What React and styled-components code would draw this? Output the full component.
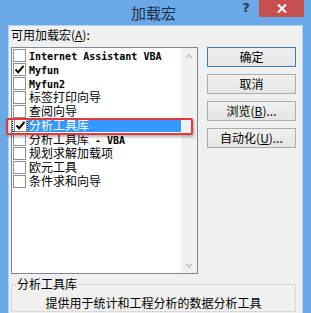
import styled, { createGlobalStyle } from "styled-components";

const GlobalStyle = createGlobalStyle`
  html, body {
    margin: 0;
    padding: 0;
    overflow: hidden;
  }
  body {
    font-family: "Noto Sans CJK SC", "Noto Sans", sans-serif;
    font-size: 12px;
    color: #000;
  }
`;

const Window = styled.div`
  width: 311px;
  height: 313px;
  background: #6ba8e7;
  display: flex;
  flex-direction: column;
  overflow: hidden;
`;

const TitleBar = styled.div`
  height: 25px;
  flex: none;
  display: grid;
  grid-template-columns: 1fr auto 1fr;
  align-items: start;
`;

const Title = styled.div`
  grid-column: 2;
  padding-right: 4px;
  font-size: 15px;
  line-height: 25px;
  color: #1c2f45;
`;

const Controls = styled.div`
  grid-column: 3;
  justify-self: end;
  display: flex;
  margin-right: 7px;
`;

const Help = styled.div`
  width: 26px;
  height: 17px;
  font-family: "DejaVu Sans", sans-serif;
  font-weight: bold;
  font-size: 13px;
  line-height: 15px;
  text-align: center;
  color: #2a3a4c;
`;

const Close = styled.div`
  width: 45px;
  height: 17px;
  background: #c75050;
  display: flex;
  align-items: center;
  justify-content: center;
`;

const Client = styled.div`
  flex: 1;
  margin: 0 8px;
  border: 1px solid #b4d2f1;
  border-bottom: none;
  background: #f0f0f0;
  padding: 0 6px 0 2px;
`;

const Label = styled.div`
  height: 21px;
  line-height: 16px;
  padding-top: 1px;
  box-sizing: border-box;
`;

const MainRow = styled.div`
  display: flex;
  gap: 9px;
  align-items: flex-start;
`;

const ListBox = styled.div`
  position: relative;
  width: 187px;
  height: 227px;
  box-sizing: border-box;
  border: 1px solid #828790;
  background: #fff;
  display: flex;
`;

const Items = styled.div`
  flex: 1;
  padding-top: 0;
`;

const Row = styled.div`
  display: flex;
  height: 14px;
  line-height: 14px;
`;

const CheckCell = styled.div`
  width: 16px;
  height: 14px;
  box-sizing: border-box;
  display: flex;
  align-items: center;
  padding-left: 1px;
  border: 1px dotted ${(p) => (p.$focus ? "#000" : "transparent")};
  border-width: ${(p) => (p.$focus ? "1px" : "0")};
`;

const Box = styled.div`
  width: 13px;
  height: 13px;
  box-sizing: border-box;
  border: 1px solid #8e8f8f;
  background: #fff;
  display: flex;
  align-items: center;
  justify-content: center;
`;

const ItemText = styled.div`
  flex: 1;
  padding-left: 1px;
  white-space: pre;
  background: ${(p) => (p.$selected ? "#3399ff" : "transparent")};
  color: ${(p) => (p.$selected ? "#fff" : "#000")};
`;

const Ascii = styled.span`
  font-family: "DejaVu Sans Mono", monospace;
  font-size: 10px;
  font-weight: bold;
`;

const ScrollBar = styled.div`
  width: 16px;
  background: #f0f0f0;
  display: flex;
  flex-direction: column;
  justify-content: space-between;
  align-items: center;
  padding: 6px 0 5px;
  box-sizing: border-box;
`;

const Highlight = styled.div`
  position: absolute;
  left: -6px;
  top: 70px;
  width: 187px;
  height: 17px;
  box-sizing: border-box;
  border: 2px solid #e5383b;
  border-radius: 2px;
  box-shadow: 1px 2px 3px rgba(0, 0, 0, 0.3);
  pointer-events: none;
`;

const Buttons = styled.div`
  width: 89px;
  display: flex;
  flex-direction: column;
  gap: 7px;
`;

const Button = styled.div`
  height: 20px;
  box-sizing: border-box;
  border: 1px solid ${(p) => (p.$default ? "#3c7fb1" : "#acacac")};
  background: linear-gradient(#f0f0f0, #e5e5e5);
  text-align: center;
  line-height: 18px;
`;

const Group = styled.fieldset`
  margin: 3px 0 0;
  padding: 0;
  border: 1px solid #d9d9d9;
  min-width: 0;
`;

const Legend = styled.legend`
  margin-left: 4px;
  padding: 0 1px;
  line-height: 14px;
`;

const Description = styled.div`
  text-align: center;
  line-height: 16px;
  margin-top: 4px;
`;

const Check = () => (
  <svg width="11" height="11" viewBox="0 0 11 11">
    <path d="M1.5 5.5 L4.2 8.3 L9.5 1.8" fill="none" stroke="#000" strokeWidth="2" />
  </svg>
);

const Chevron = ({ up }) => (
  <svg width="8" height="5" viewBox="0 0 8 5">
    <path
      d={up ? "M1 4 L4 1 L7 4" : "M1 1 L4 4 L7 1"}
      fill="none"
      stroke="#bdbdbd"
      strokeWidth="1.3"
    />
  </svg>
);

const items = [
  { name: "Internet Assistant VBA" },
  { name: "Myfun", checked: true },
  { name: "Myfun2" },
  { name: "标签打印向导" },
  { name: "查阅向导" },
  { name: "分析工具库", checked: true, selected: true },
  { name: "分析工具库 - VBA" },
  { name: "规划求解加载项" },
  { name: "欧元工具" },
  { name: "条件求和向导" },
];

const renderName = (name) =>
  name
    .split(/([\x00-\x7f]+)/)
    .filter(Boolean)
    .map((part, i) =>
      /^[\x00-\x7f]+$/.test(part) ? <Ascii key={i}>{part}</Ascii> : part
    );

const App = () => (
  <Window>
    <GlobalStyle />
    <TitleBar>
      <Title>加载宏</Title>
      <Controls>
        <Help>?</Help>
        <Close>
          <svg width="10" height="9" viewBox="0 0 10 9">
            <path d="M1 0.5 L9 8.5 M9 0.5 L1 8.5" stroke="#fff" strokeWidth="2" />
          </svg>
        </Close>
      </Controls>
    </TitleBar>
    <Client>
      <Label>
        可用加载宏(<u>A</u>):
      </Label>
      <MainRow>
        <ListBox>
          <Items>
            {items.map((x) => (
              <Row key={x.name}>
                <CheckCell $focus={x.selected}>
                  <Box>{x.checked && <Check />}</Box>
                </CheckCell>
                <ItemText $selected={x.selected}>{renderName(x.name)}</ItemText>
              </Row>
            ))}
          </Items>
          <ScrollBar>
            <Chevron up />
            <Chevron />
          </ScrollBar>
          <Highlight />
        </ListBox>
        <Buttons>
          <Button $default>确定</Button>
          <Button>取消</Button>
          <Button>
            浏览(<u>B</u>)...
          </Button>
          <Button>
            自动化(<u>U</u>)...
          </Button>
        </Buttons>
      </MainRow>
      <Group>
        <Legend>分析工具库</Legend>
        <Description>提供用于统计和工程分析的数据分析工具</Description>
      </Group>
    </Client>
  </Window>
);

export default App;
